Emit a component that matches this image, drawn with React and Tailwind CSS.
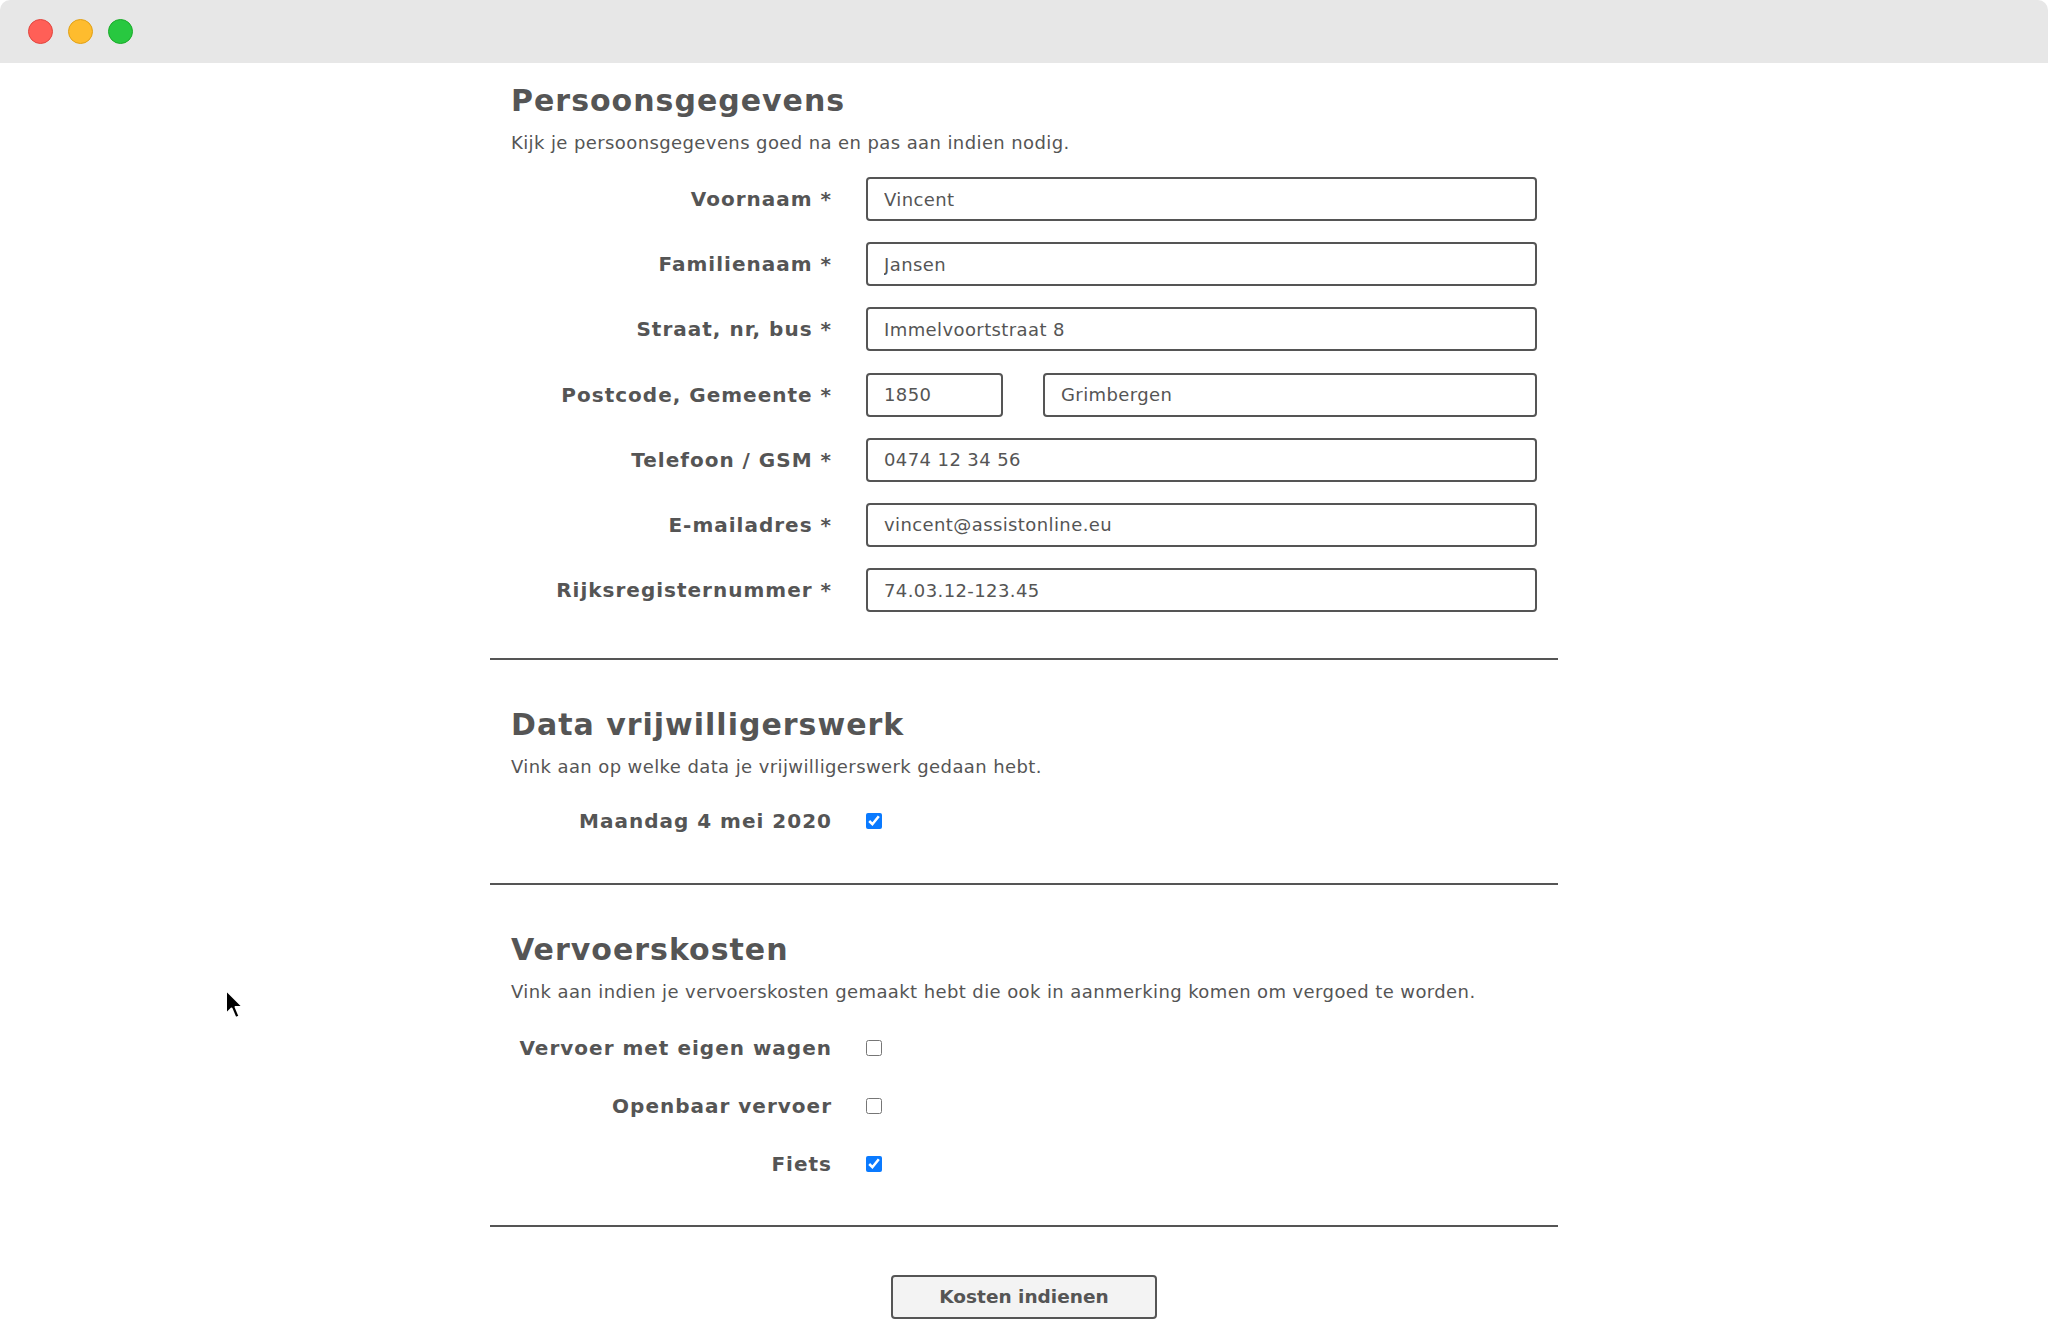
import React from "react";

const personal = [
  { label: "Voornaam *", value: "Vincent" },
  { label: "Familienaam *", value: "Jansen" },
  { label: "Straat, nr, bus *", value: "Immelvoortstraat 8" },
  { label: "Postcode, Gemeente *", value: ["1850", "Grimbergen"] },
  { label: "Telefoon / GSM *", value: "0474 12 34 56" },
  { label: "E-mailadres *", value: "vincent@assistonline.eu" },
  { label: "Rijksregisternummer *", value: "74.03.12-123.45" },
];

const dates = [{ label: "Maandag 4 mei 2020", checked: true }];

const transport = [
  { label: "Vervoer met eigen wagen", checked: false },
  { label: "Openbaar vervoer", checked: false },
  { label: "Fiets", checked: true },
];

const inputCls =
  "h-[44px] rounded-[4px] border-2 border-[#555] bg-white px-[16px] text-[18px] tracking-[0.4px] text-[#555] outline-none";

const labelCls =
  "flex items-center justify-end text-[20px] font-bold tracking-[1px] text-[#555]";

function TitleBar() {
  return (
    <div className="flex h-[63px] items-center gap-[15px] rounded-t-[10px] bg-[#e7e7e7] pl-[28px]">
      <span className="h-[25px] w-[25px] rounded-full border border-[#e2463f] bg-[#ff5f57]" />
      <span className="h-[25px] w-[25px] rounded-full border border-[#e1a116] bg-[#febc2e]" />
      <span className="h-[25px] w-[25px] rounded-full border border-[#1aab29] bg-[#28c840]" />
    </div>
  );
}

function SectionHead({ title, text, first }) {
  return (
    <div className="px-[21px]">
      <h2
        className={
          (first ? "mt-[20px] " : "mt-[47px] ") +
          "text-[30px] font-bold leading-[36px] tracking-[1px] text-[#555]"
        }
      >
        {title}
      </h2>
      <p className="mt-[12px] text-[18px] leading-[24px] tracking-[0.4px] text-[#555]">{text}</p>
    </div>
  );
}

function CheckRows({ items, low }) {
  return (
    <div
      className={
        (low ? "mt-[26px] " : "mt-[24px] ") +
        "grid grid-cols-[321px_1fr] gap-x-[34px] gap-y-[22px] px-[21px]"
      }
    >
      {items.map((it) => (
        <React.Fragment key={it.label}>
          <label className={labelCls + " h-[36px]"}>{it.label}</label>
          <div className="flex h-[36px] items-center">
            <input
              type="checkbox"
              defaultChecked={it.checked}
              className="m-0 h-[16px] w-[16px] accent-[#0a7aff]"
            />
          </div>
        </React.Fragment>
      ))}
    </div>
  );
}

function Cursor() {
  return (
    <svg
      className="absolute left-[224px] top-[988px]"
      width="22"
      height="34"
      viewBox="0 0 22 34"
    >
      <path
        d="M2 2 L2 26 L7.5 20.5 L11.5 30 L15.5 28.3 L11.6 19 L19 19 Z"
        fill="#000"
        stroke="#fff"
        strokeWidth="2"
        strokeLinejoin="round"
      />
    </svg>
  );
}

export default function App() {
  return (
    <div className="relative min-h-[1344px] bg-white font-['DejaVu_Sans','Verdana',sans-serif] text-[#555]">
      <TitleBar />
      <div className="mx-auto w-[1068px]">
        <SectionHead
          first
          title="Persoonsgegevens"
          text="Kijk je persoonsgegevens goed na en pas aan indien nodig."
        />
        <div className="mt-[22px] grid grid-cols-[321px_1fr] gap-x-[34px] gap-y-[21.2px] px-[21px]">
          {personal.map((row) => (
            <React.Fragment key={row.label}>
              <label className={labelCls + " h-[44px]"}>{row.label}</label>
              {Array.isArray(row.value) ? (
                <div className="flex gap-[40px]">
                  <input className={inputCls + " w-[137px]"} defaultValue={row.value[0]} />
                  <input className={inputCls + " flex-1"} defaultValue={row.value[1]} />
                </div>
              ) : (
                <input className={inputCls + " w-full"} defaultValue={row.value} />
              )}
            </React.Fragment>
          ))}
        </div>
        <hr className="mt-[46px] border-t-2 border-[#555]" />

        <SectionHead
          title="Data vrijwilligerswerk"
          text="Vink aan op welke data je vrijwilligerswerk gedaan hebt."
        />
        <CheckRows items={dates} />
        <hr className="mt-[44px] border-t-2 border-[#555]" />

        <SectionHead
          title="Vervoerskosten"
          text="Vink aan indien je vervoerskosten gemaakt hebt die ook in aanmerking komen om vergoed te worden."
        />
        <CheckRows items={transport} low />
        <hr className="mt-[43px] border-t-2 border-[#555]" />

        <div className="mt-[48px] flex justify-center">
          <button className="h-[44px] w-[266px] rounded-[4px] border-2 border-[#555] bg-[#f3f3f3] text-[18.5px] font-bold text-[#555]">
            Kosten indienen
          </button>
        </div>
      </div>
      <Cursor />
    </div>
  );
}
